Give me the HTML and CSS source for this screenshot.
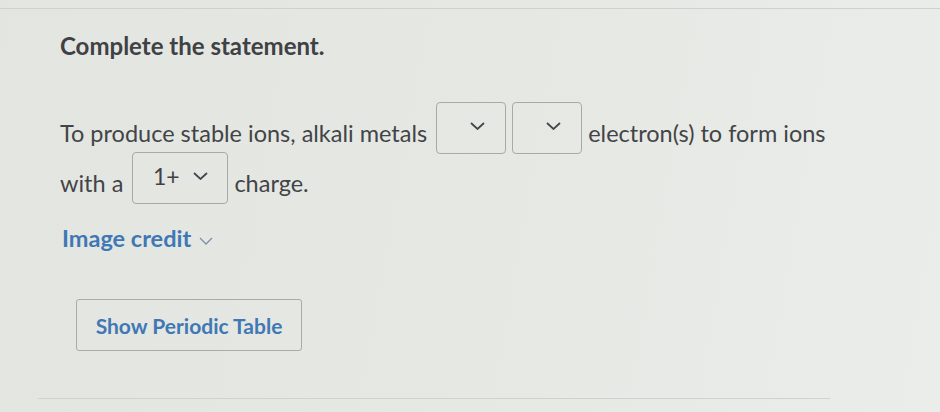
FILE: index.html
```html
<!DOCTYPE html>
<html lang="en">
<head>
    <meta charset="UTF-8">
    <meta name="viewport" content="width=device-width, initial-scale=1.0">
    <title>Complete the statement</title>
    <link rel="stylesheet" href="styles.css">
</head>
<body>
    <div class="question">
        <h1 class="prompt">Complete the statement.</h1>

        <p class="statement">
            To produce stable ions, alkali metals
            <span class="select">
                <span class="select-value"></span>
                <svg class="chevron" width="15" height="8" viewBox="0 0 15 8"><polyline points="1,1 7.5,7 14,1"/></svg>
            </span><span class="select">
                <span class="select-value"></span>
                <svg class="chevron" width="15" height="8" viewBox="0 0 15 8"><polyline points="1,1 7.5,7 14,1"/></svg>
            </span>
            electron(s) to form ions
            <br>
            with a
            <span class="select select-wide">
                <span class="select-value">1+</span>
                <svg class="chevron" width="15" height="8" viewBox="0 0 15 8"><polyline points="1,1 7.5,7 14,1"/></svg>
            </span>
            charge.
        </p>

        <div class="credit">
            Image credit
            <svg class="credit-chevron" width="14" height="8" viewBox="0 0 14 8"><polyline points="1,1 7,7 13,1"/></svg>
        </div>

        <button class="btn-periodic" type="button">Show Periodic Table</button>

        <div class="divider"></div>
    </div>
</body>
</html>
```

FILE: styles.css
```css
body {
    margin: 0;
    min-height: 412px;
    background: linear-gradient(100deg, #e3e5e1 0%, #e6e8e4 55%, #ebedea 100%);
    font-family: 'Lato', 'Open Sans', sans-serif;
    color: #424447;
    overflow: hidden;
}

.question {
    margin-top: 8px;
    border-top: 1px solid #cfd1ce;
    padding-left: 60px;
}

.prompt {
    margin: 22px 0 0;
    font-size: 24px;
    font-weight: bold;
    color: #3f4144;
}

.statement {
    margin: 48px 0 0;
    font-size: 23.5px;
    line-height: 50px;
}

/* dropdowns sit a little above the text middle, like the real widget */
.select {
    display: inline-flex;
    align-items: center;
    justify-content: center;
    gap: 13px;
    box-sizing: border-box;
    width: 70px;
    height: 52px;
    margin: -16px 0 0 3px;
    padding-bottom: 4px;
    vertical-align: middle;
    border: 1.5px solid #a8aaa8;
    border-radius: 4px;
}

.select + .select {
    margin-left: 6px;
}

.select-wide {
    width: 96px;
}

.select-value {
    font-size: 23px;
    color: #3f4144;
}

.chevron polyline {
    fill: none;
    stroke: #45474a;
    stroke-width: 1.8;
}

.credit {
    margin: 16px 0 0 2px;
    font-size: 23.5px;
    font-weight: bold;
    color: #3f78b4;
}

.credit-chevron {
    margin-left: 2px;
    vertical-align: middle;
}

.credit-chevron polyline {
    fill: none;
    stroke: #7a93ad;
    stroke-width: 1.3;
}

.btn-periodic {
    display: block;
    width: 226px;
    height: 52px;
    margin: 47px 0 0 16px;
    background: transparent;
    border: 1.5px solid #a9aba9;
    border-radius: 3px;
    font-family: 'Lato', 'Open Sans', sans-serif;
    font-size: 21px;
    font-weight: bold;
    color: #3f78b4;
}

.divider {
    width: 792px;
    margin: 47px 0 0 -22px;
    border-top: 1px solid #d0d2cf;
}
```
